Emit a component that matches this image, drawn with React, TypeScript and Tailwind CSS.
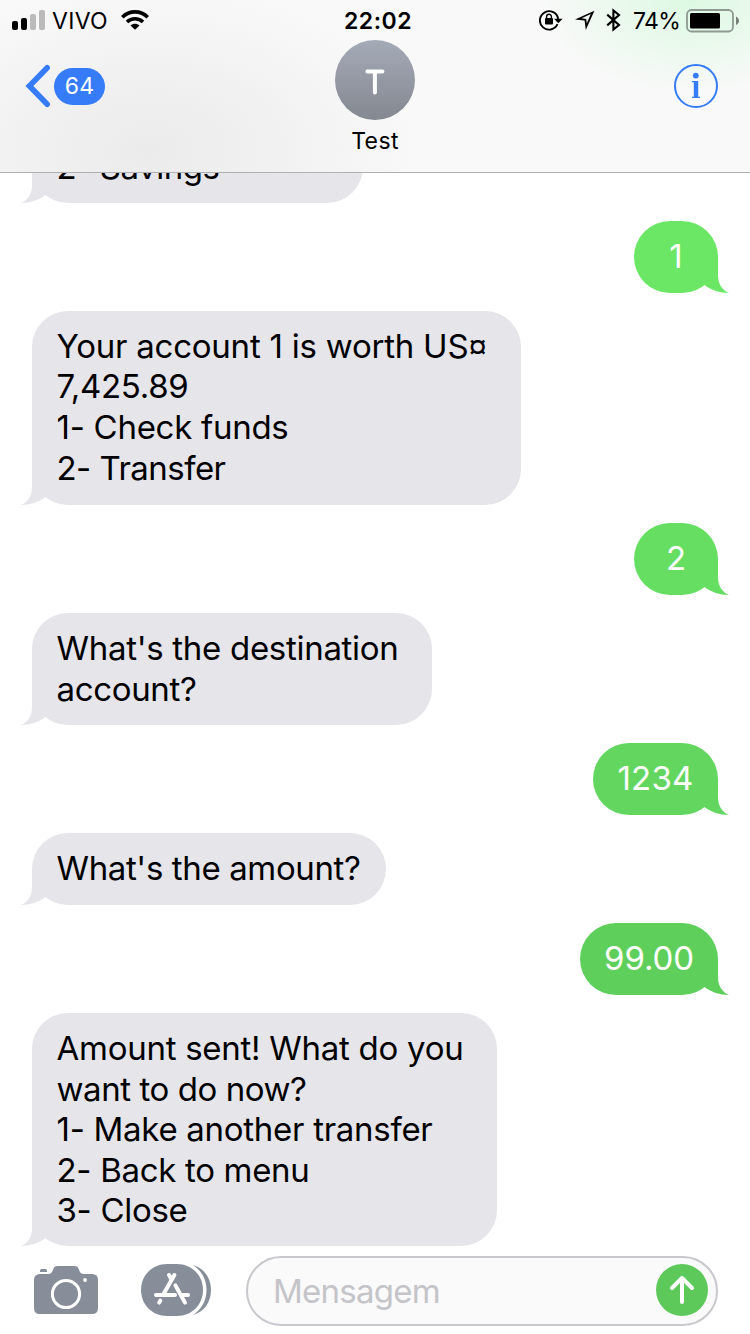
import React from "react";

type Line = { text: string; width: number };
type Message = { side: "in" | "out"; box: string; lines: Line[] };

const messages: Message[] = [
  { side: "in", box: "w-[331px] h-[72px] pt-[2px]", lines: [{ text: "2- Savings", width: 162 }] },
  { side: "out", box: "w-[84px] h-[72px] bg-[#6be765] text-[#6be765]", lines: [{ text: "1", width: 0 }] },
  {
    side: "in",
    box: "w-[489px] h-[194px]",
    lines: [
      { text: "Your account 1 is worth US¤", width: 429 },
      { text: "7,425.89", width: 131 },
      { text: "1- Check funds", width: 231 },
      { text: "2- Transfer", width: 168 },
    ],
  },
  { side: "out", box: "w-[84px] h-[72px] bg-[#66de62] text-[#66de62]", lines: [{ text: "2", width: 0 }] },
  {
    side: "in",
    box: "w-[400px] h-[112px] pt-[1px]",
    lines: [
      { text: "What's the destination", width: 341 },
      { text: "account?", width: 139 },
    ],
  },
  { side: "out", box: "w-[125px] h-[72px] bg-[#62d65f] text-[#62d65f]", lines: [{ text: "1234", width: 75 }] },
  { side: "in", box: "w-[354px] h-[72px]", lines: [{ text: "What's the amount?", width: 303 }] },
  { side: "out", box: "w-[138px] h-[72px] bg-[#5fcf5c] text-[#5fcf5c]", lines: [{ text: "99.00", width: 89 }] },
  {
    side: "in",
    box: "w-[465px] h-[233px] pt-[2px]",
    lines: [
      { text: "Amount sent! What do you", width: 406 },
      { text: "want to do now?", width: 249 },
      { text: "1- Make another transfer", width: 375 },
      { text: "2- Back to menu", width: 252 },
      { text: "3- Close", width: 130 },
    ],
  },
];

/* Letter spacing is tuned so every line takes its intended width. */
function FittedLine({ text, width }: Line) {
  const ref = React.useRef<HTMLSpanElement>(null);
  const [spacing, setSpacing] = React.useState(0);
  React.useLayoutEffect(() => {
    if (ref.current && width > 0) {
      ref.current.style.letterSpacing = "0px";
      const natural = ref.current.getBoundingClientRect().width;
      const next = (width + 1 - natural) / text.length;
      ref.current.style.letterSpacing = `${next}px`;
      setSpacing(next);
    }
  }, [text, width]);
  const hasSign = text.endsWith("¤");
  return (
    <span className="block h-[40.67px]">
      <span ref={ref} className="inline-block whitespace-pre" style={{ letterSpacing: spacing }}>
        {hasSign ? text.slice(0, -1) : text}
        {hasSign && <span className="font-['Liberation_Sans']">¤</span>}
      </span>
    </span>
  );
}

function Bubble({ side, box, lines }: Message) {
  const incoming = side === "in";
  return (
    <div
      className={`${box} relative flex shrink-0 flex-col justify-center rounded-[36px] text-[33px] leading-[40.67px] ${
        incoming ? "self-start bg-[#e5e5ea] pl-[24.5px] text-[#e5e5ea]" : "items-center self-end"
      }`}
    >
      <svg
        className={`absolute bottom-0 ${incoming ? "-left-[11px]" : "-right-[11px] -scale-x-100"}`}
        width="46"
        height="36"
        viewBox="0 0 46 36"
        fill="currentColor"
      >
        <path d="M11 0V18C11 27 7 33 0 36C9 36 18 33 24 28.5L46 10V0Z" />
      </svg>
      <div className={`relative mb-[2px] ${incoming ? "text-black" : "text-white"}`}>
        {lines.map((l) => (
          <FittedLine key={l.text} {...l} />
        ))}
      </div>
    </div>
  );
}

function StatusBar() {
  return (
    <div className="flex h-[40px] items-center justify-between pl-[12px] pr-[11px] text-[23px] text-black">
      <div className="flex w-[300px] items-center">
        <svg width="34" height="20" viewBox="0 0 34 20">
          <rect x="0" y="11" width="6" height="9" rx="2" />
          <rect x="9" y="8" width="6" height="12" rx="2" />
          <rect x="18" y="4" width="6" height="16" rx="2" fill="#bababa" />
          <rect x="27" y="0" width="6" height="20" rx="2" fill="#bababa" />
        </svg>
        <span className="ml-[6px] mt-[2px] w-[61px] whitespace-nowrap tracking-[0.3px]">VIVO</span>
        <svg className="ml-[8px]" width="28" height="20" viewBox="0 0 28 20" fill="none" stroke="#000" strokeWidth="3.6">
          <path d="M1.3 7.2C8.3 .1 19.7 .1 26.7 7.2" />
          <path d="M6 12C10.5 7.7 17.5 7.7 22 12" />
          <path d="M14 19.8L9.5 15.6C12 13.2 16 13.2 18.5 15.6Z" fill="#000" stroke="none" />
        </svg>
      </div>
      <span className="ml-[5px] mt-[2px] w-[80px] text-center font-semibold tracking-[0.5px]">22:02</span>
      <div className="flex w-[300px] items-center justify-end">
        <svg width="24" height="22" viewBox="0 0 24 22">
          <path d="M18.5 15.2A9.2 9.2 0 1 1 19.2 10" fill="none" stroke="#000" strokeWidth="1.9" />
          <path d="M15 9.8H23.6L19.3 14.2Z" />
          <rect x="6" y="9" width="8" height="6.4" rx="1" />
          <path d="M7.6 10V7.6a2.4 2.4 0 0 1 4.8 0V10" fill="none" stroke="#000" strokeWidth="1.4" />
        </svg>
        <svg className="ml-[12px]" width="20" height="22" viewBox="0 0 20 22">
          <path
            fillRule="evenodd"
            d="M19.4 1.8L10.8 21L9.6 11.6L0 10.4ZM15.8 5L6.6 9.3L11.2 10L11.8 14.2Z"
          />
        </svg>
        <svg className="ml-[11px]" width="16" height="24" viewBox="0 0 16 24" fill="none" stroke="#000" strokeWidth="2.1">
          <path d="M1.2 6.6L13 17L7.4 21.6V2.4L13 7L1.2 17.4" />
        </svg>
        <span className="ml-[11px] mt-[2px] w-[47px] whitespace-nowrap tracking-[-0.7px]">74%</span>
        <svg className="ml-[6px] mt-[1px]" width="53" height="24" viewBox="0 0 53 24">
          <rect x="1" y="1" width="46" height="21.5" rx="4.5" fill="none" stroke="#8f9991" strokeWidth="1.8" />
          <rect x="4" y="4" width="30" height="15.5" rx="1.5" />
          <path d="M50 7.5C54 9.5 54 14 50 16Z" fill="#777f78" />
        </svg>
      </div>
    </div>
  );
}

function Header() {
  return (
    <header className="flex h-[173px] shrink-0 flex-col border-b border-[#b0b0b2] bg-[#f9f9f9] bg-[radial-gradient(ellipse_150px_95px_at_690px_0px,#dcf9e3_0%,#e8f9eb_40%,#f9f9f900_100%),radial-gradient(ellipse_270px_170px_at_150px_150px,#ebebec_0%,#f0f0f1_40%,#f9f9f900_100%)]">
      <StatusBar />
      <div className="flex justify-between">
        <div className="flex w-[200px] pl-[25px] pt-[24px]">
          <svg width="26" height="44" viewBox="0 0 26 44" fill="none" stroke="#367bf7" strokeWidth="5.6" strokeLinecap="round" strokeLinejoin="miter">
            <path d="M22.2 3.8L4.4 22L22.2 40.2" />
          </svg>
          <span className="ml-[3px] mt-[4px] flex h-[37px] w-[51px] items-center justify-center rounded-full bg-[#367bf7] text-[23px] tracking-[0.2px] text-white">
            64
          </span>
        </div>
        <div className="flex w-[120px] flex-col items-center">
          <div className="flex h-[80px] w-[80px] items-center justify-center rounded-full bg-gradient-to-b from-[#a5aab8] to-[#848890] pt-[3px]">
            <svg width="20" height="26" viewBox="0 0 20 26" fill="none" stroke="#fff" strokeWidth="4" strokeLinecap="round">
              <path d="M2.4 2.5H17.4M9.9 2.5V23.5" />
            </svg>
          </div>
          <span className="mt-[4px] text-[23px] leading-[34px] tracking-[0.4px] text-black">Test</span>
        </div>
        <div className="flex w-[200px] justify-end pr-[32px] pt-[24px]">
          <svg width="44" height="44" viewBox="0 0 44 44">
            <circle cx="22" cy="22" r="21" fill="none" stroke="#367bf7" strokeWidth="2" />
            <circle cx="21.8" cy="11.6" r="2.9" fill="#367bf7" />
            <path d="M18 17H24.2V32.8H26V34H18V32.8H19.8V18.2H18Z" fill="#367bf7" />
          </svg>
        </div>
      </div>
    </header>
  );
}

function Composer() {
  return (
    <footer className="flex h-[88px] shrink-0 items-start bg-white">
      <svg className="ml-[34px] mt-[20px] shrink-0" width="64" height="48" viewBox="0 0 64 48">
        <path
          d="M6 8H14C17 8 18 6.5 19 3.8C20 1 21 0 24 0H40C43 0 44 1 45 3.8C46 6.5 47 8 50 8H58Q64 8 64 14V42Q64 48 58 48H6Q0 48 0 42V14Q0 8 6 8Z"
          fill="#878e99"
        />
        <path d="M6 6V4.5Q6 3 7.5 3H11.5Q13 3 13 4.5V6Z" fill="#878e99" />
        <circle cx="32" cy="28" r="13.6" fill="none" stroke="#fff" strokeWidth="3" />
        <circle cx="51" cy="14" r="1.9" fill="#fff" />
      </svg>
      <svg className="ml-[43px] mt-[18px] shrink-0" width="70" height="52" viewBox="0 0 70 52">
        <path d="M52 1C63 4 70 14 70 26S63 48 52 51C60 46 65.5 37 65.5 26S60 6 52 1Z" fill="#878e99" />
        <path d="M26 0H36C51 0 62 11.5 62 26S51 52 36 52H26C11 52 0 40.5 0 26S11 0 26 0Z" fill="#878e99" />
        <g fill="none" stroke="#fff" strokeWidth="4" strokeLinecap="round">
          <path d="M15 31H34M41.5 31H47" />
          <path d="M33.4 11L22.4 30.2M19.3 36.6L18.2 38.6" />
          <path d="M28 11L30 14.4M34.4 21.4L44 38.6" />
        </g>
      </svg>
      <div className="ml-[35px] mt-[10px] flex h-[70px] w-[472px] items-center justify-between rounded-full border-2 border-[#c8c8cd] bg-[#fafafa] pl-[25px] pr-[8px]">
        <span className="mt-[2px] text-[33px] tracking-[-0.75px] text-[#c4c4c9]">Mensagem</span>
        <svg className="-mt-[2px]" width="52" height="52" viewBox="0 0 52 52">
          <circle cx="26" cy="26" r="26" fill="#5ec95b" />
          <path d="M26 38V14.5M16 24L26 14L36 24" fill="none" stroke="#fff" strokeWidth="4" strokeLinecap="round" strokeLinejoin="round" />
        </svg>
      </div>
    </footer>
  );
}

export default function App() {
  return (
    <div className="flex h-[1334px] w-[750px] flex-col overflow-hidden bg-white font-['Inter','Liberation_Sans',sans-serif]">
      <Header />
      <main className="flex min-h-0 flex-1 flex-col justify-end gap-[18px] overflow-hidden px-[32px]">
        {messages.map((m, i) => (
          <Bubble key={i} {...m} />
        ))}
      </main>
      <Composer />
    </div>
  );
}
